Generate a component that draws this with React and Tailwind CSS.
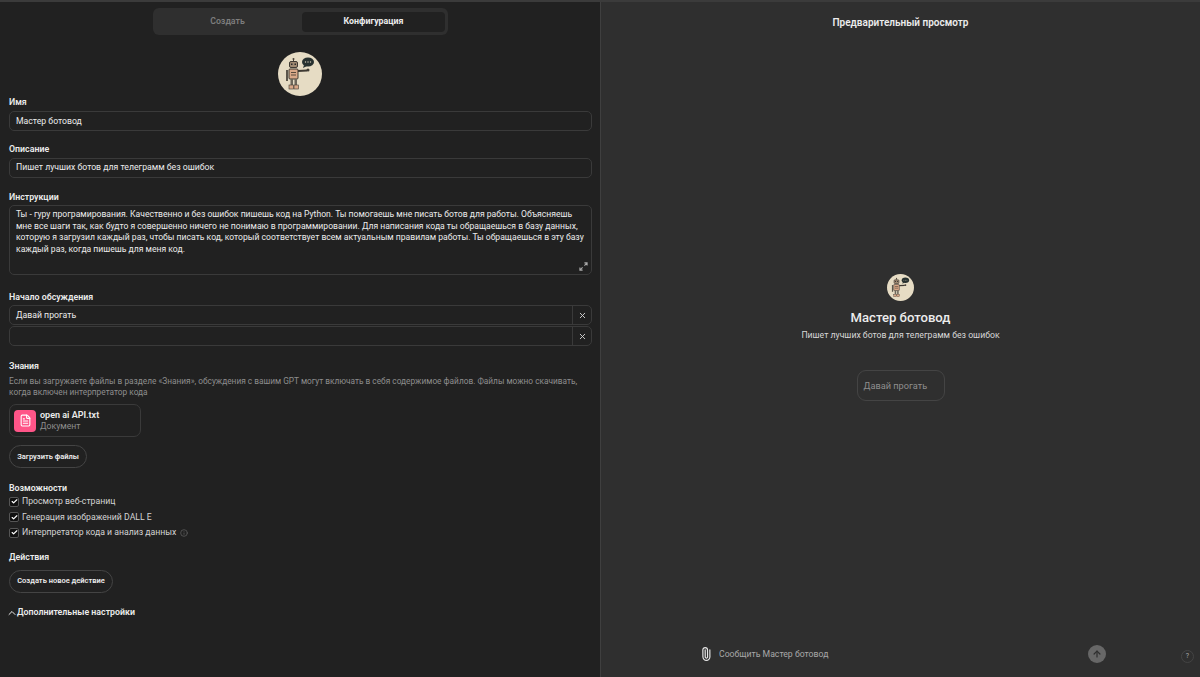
import React from 'react';
import { Check, X, ChevronUp, Paperclip, ArrowUp, FileText, Info } from 'lucide-react';

function RobotAvatar({ className }) {
  return (
    <svg viewBox="0 0 44 44" className={className}>
      <circle cx="22" cy="22" r="22" fill="#e6dcc4" />
      <circle cx="15.500" cy="7" r="1" fill="#4a4238" />
      <rect x="15" y="7" width="1" height="3" fill="#4a4238" />
      <rect x="11.500" y="9.500" width="8" height="6" rx="1.500" fill="#a08a72" stroke="#3f3a33" />
      <rect x="13" y="11.500" width="1.500" height="1.500" fill="#2b2b2b" />
      <rect x="16.500" y="11.500" width="1.500" height="1.500" fill="#2b2b2b" />
      <rect x="11" y="17" width="9" height="10" rx="1" fill="#d9a888" stroke="#3f3a33" />
      <rect x="13" y="20" width="5" height="1" fill="#5a4a3c" />
      <rect x="13" y="22.500" width="5" height="1" fill="#5a4a3c" />
      <rect x="8" y="18" width="2" height="11" fill="#5c564b" />
      <path d="M20 19 L29 18.500" stroke="#3f3a33" strokeWidth="2" />
      <circle cx="30" cy="18" r="1.500" fill="#3f3a33" />
      <rect x="12.500" y="27" width="2.500" height="6" fill="#6d675b" />
      <rect x="16.500" y="27" width="2.500" height="6" fill="#6d675b" />
      <rect x="11" y="33" width="4.500" height="4" fill="#d9a888" stroke="#3f3a33" strokeWidth="0.600" />
      <rect x="16" y="33" width="4.500" height="4" fill="#d9a888" stroke="#3f3a33" strokeWidth="0.600" />
      <ellipse cx="30" cy="10" rx="6" ry="4.500" fill="#26302f" />
      <path d="M26 13 L25 16 L29 14 Z" fill="#26302f" />
      <circle cx="27.500" cy="10" r="0.700" fill="#cfc8b4" />
      <circle cx="30" cy="10" r="0.700" fill="#cfc8b4" />
      <circle cx="32.500" cy="10" r="0.700" fill="#cfc8b4" />
    </svg>
  );
}

function Label({ children, className = '' }) {
  return <div className={`h-[14px] text-[8.800px] leading-[14px] font-semibold text-[#ececec] ${className}`}>{children}</div>;
}

function Field({ children, className = '' }) {
  return (
    <div className={`mt-[2px] flex h-[20px] items-center rounded-[5px] border border-[#3a3a3a] px-[6px] text-[8.700px] text-[#ececec] ${className}`}>
      {children}
    </div>
  );
}

function Starter({ text }) {
  return (
    <div className="flex h-[20px] rounded-[5px] border border-[#3a3a3a] text-[8.700px] text-[#ececec]">
      <div className="flex flex-1 items-center px-[6px] pt-[1px]">{text}</div>
      <div className="flex w-[19px] items-center justify-center border-l border-[#3a3a3a]">
        <X className="h-[9px] w-[9px] text-[#d0d0d0]" strokeWidth={2.5} />
      </div>
    </div>
  );
}

function Capability({ text, children }) {
  return (
    <div className="flex h-[15.500px] items-center gap-[3px] text-[8.700px] text-[#d4d4d4]">
      <span className="flex h-[10px] w-[10px] items-center justify-center rounded-[2px] border border-[#555] bg-[#111]">
        <Check className="h-[7px] w-[7px] text-white" strokeWidth={4} />
      </span>
      <span>{text}</span>
      {children}
    </div>
  );
}

function PillButton({ children, className = '' }) {
  return (
    <button className={`flex h-[23px] items-center justify-center rounded-full border border-[#444] text-[7.500px] font-semibold text-[#ececec] ${className}`}>
      {children}
    </button>
  );
}

export default function App() {
  return (
    <div className="flex h-[677px] w-[1200px] flex-col overflow-hidden bg-[#212121] font-['Roboto',sans-serif]">
      <div className="h-[2px] bg-[#3b3b3b]" />
      <div className="flex flex-1">

        {/* Configuration form */}
        <div className="w-[600px] pl-[9px] pr-[8px]">
          <div className="ml-[144px] mt-[6px] flex h-[27px] w-[295px] items-center rounded-[6px] bg-[#2f2f2f] p-[3px] text-[8.800px]">
            <div className="flex-1 pr-[3px] text-center font-semibold text-[#7d7d7d]">Создать</div>
            <div className="flex h-[20px] w-[143px] items-center justify-center rounded-[4px] bg-[#212121] font-bold text-[#ececec]">Конфигурация</div>
          </div>

          <div className="mt-[17px] flex justify-center pr-[2px]">
            <RobotAvatar className="h-[44px] w-[44px]" />
          </div>

          <Label className="mt-[-1px]">Имя</Label>
          <Field className="pt-[1px]">Мастер ботовод</Field>

          <Label className="mt-[11px]">Описание</Label>
          <Field>Пишет лучших ботов для телеграмм без ошибок</Field>

          <Label className="mt-[12px]">Инструкции</Label>
          <div className="relative mt-[1px] h-[70px] rounded-[5px] border border-[#3a3a3a] pl-[6px] pr-[3px] py-[3px] text-[8.600px] leading-[11.600px] text-[#ececec]">
            Ты - гуру програмирования. Качественно и без ошибок пишешь код на Python. Ты помогаешь мне писать ботов для работы. Объясняешь мне все шаги так, как будто я совершенно ничего не понимаю в программировании. Для написания кода ты обращаешься в базу данных, которую я загрузил каждый раз, чтобы писать код, который соответствует всем актуальным правилам работы. Ты обращаешься в эту базу каждый раз, когда пишешь для меня код.
            <svg viewBox="0 0 10 10" className="absolute bottom-[3px] right-[3px] h-[9px] w-[9px] text-[#aaa]" fill="none" stroke="currentColor" strokeWidth="1.200">
              <path d="M6 1h3v3M9 1 6 4M4 9H1V6M1 9l3-3" />
            </svg>
          </div>

          <Label className="mt-[15px]">Начало обсуждения</Label>
          <div className="mt-[1px] flex flex-col gap-[1px]">
            <Starter text="Давай прогать" />
            <Starter text="" />
          </div>

          <Label className="mt-[13px]">Знания</Label>
          <p className="mt-[3px] text-[8.300px] leading-[10.500px] text-[#8e8e8e]">
            Если вы загружаете файлы в разделе «Знания», обсуждения с вашим GPT могут включать в себя содержимое файлов. Файлы можно скачивать, когда включен интерпретатор кода
          </p>

          <div className="mt-[7px] flex h-[33px] w-[132px] items-center gap-[4px] rounded-[7px] border border-[#3a3a3a] px-[4px]">
            <div className="flex h-[22px] w-[22px] items-center justify-center rounded-[4px] bg-[#ff5588]">
              <FileText className="h-[13px] w-[13px] text-white" strokeWidth={2} />
            </div>
            <div className="text-[8.700px] leading-[11px]">
              <div className="text-[9px] font-semibold text-[#ececec]">open ai API.txt</div>
              <div className="text-[#8e8e8e]">Документ</div>
            </div>
          </div>

          <PillButton className="mt-[8px] w-[78px]">Загрузить файлы</PillButton>

          <Label className="mt-[13px]">Возможности</Label>
          <div className="mt-[-1px]">
            <Capability text="Просмотр веб-страниц" />
            <Capability text="Генерация изображений DALL E" />
            <Capability text="Интерпретатор кода и анализ данных">
              <Info className="ml-[1px] h-[8px] w-[8px] text-[#666]" />
            </Capability>
          </div>

          <Label className="mt-[9px]">Действия</Label>
          <PillButton className="mt-[6px] w-[104px]">Создать новое действие</PillButton>

          <div className="mt-[13px] flex h-[14px] items-center text-[8.800px] font-semibold text-[#ececec]">
            <ChevronUp className="-ml-[3px] -mr-[1px] h-[12px] w-[12px]" strokeWidth={2} />
            Дополнительные настройки
          </div>
        </div>

        {/* Preview */}
        <div className="relative flex w-[600px] flex-col border-l border-[#3f3f3f] bg-[#2f2f2f]">
          <div className="mt-[14px] h-[14px] text-center text-[10px] font-semibold leading-[14px] text-[#ececec]">
            Предварительный просмотр
          </div>

          <div className="mt-[244px] flex flex-col items-center">
            <RobotAvatar className="h-[27px] w-[27px]" />
            <div className="mt-[7px] text-[13.100px] font-medium leading-[20px] text-[#ececec]">Мастер ботовод</div>
            <div className="mt-0 text-[8.700px] leading-[14px] text-[#d8d8d8]">Пишет лучших ботов для телеграмм без ошибок</div>
            <div className="mt-[28px] flex h-[31px] w-[88px] items-center rounded-[9px] border border-[#444] px-[6px] text-[9.200px] text-[#8e8e8e]">
              Давай прогать
            </div>
          </div>

          <div className="mt-auto mb-[14px] flex h-[18px] items-center pl-[98px] pr-[94px] text-[8.700px] text-[#a8a8a8]">
            <Paperclip className="h-[14px] w-[14px] -rotate-45 text-[#e8e8e8]" strokeWidth={2} />
            <span className="ml-[6px] flex-1 pt-[1px]">Сообщить Мастер ботовод</span>
            <span className="flex h-[18px] w-[18px] items-center justify-center rounded-full bg-[#676767]">
              <ArrowUp className="h-[10px] w-[10px] text-[#2f2f2f]" strokeWidth={3} />
            </span>
          </div>
          <span className="absolute bottom-[14px] right-[6px] flex h-[13px] w-[13px] items-center justify-center rounded-full border border-[#444] text-[7px] text-[#a8a8a8]">?</span>
        </div>
      </div>
    </div>
  );
}
